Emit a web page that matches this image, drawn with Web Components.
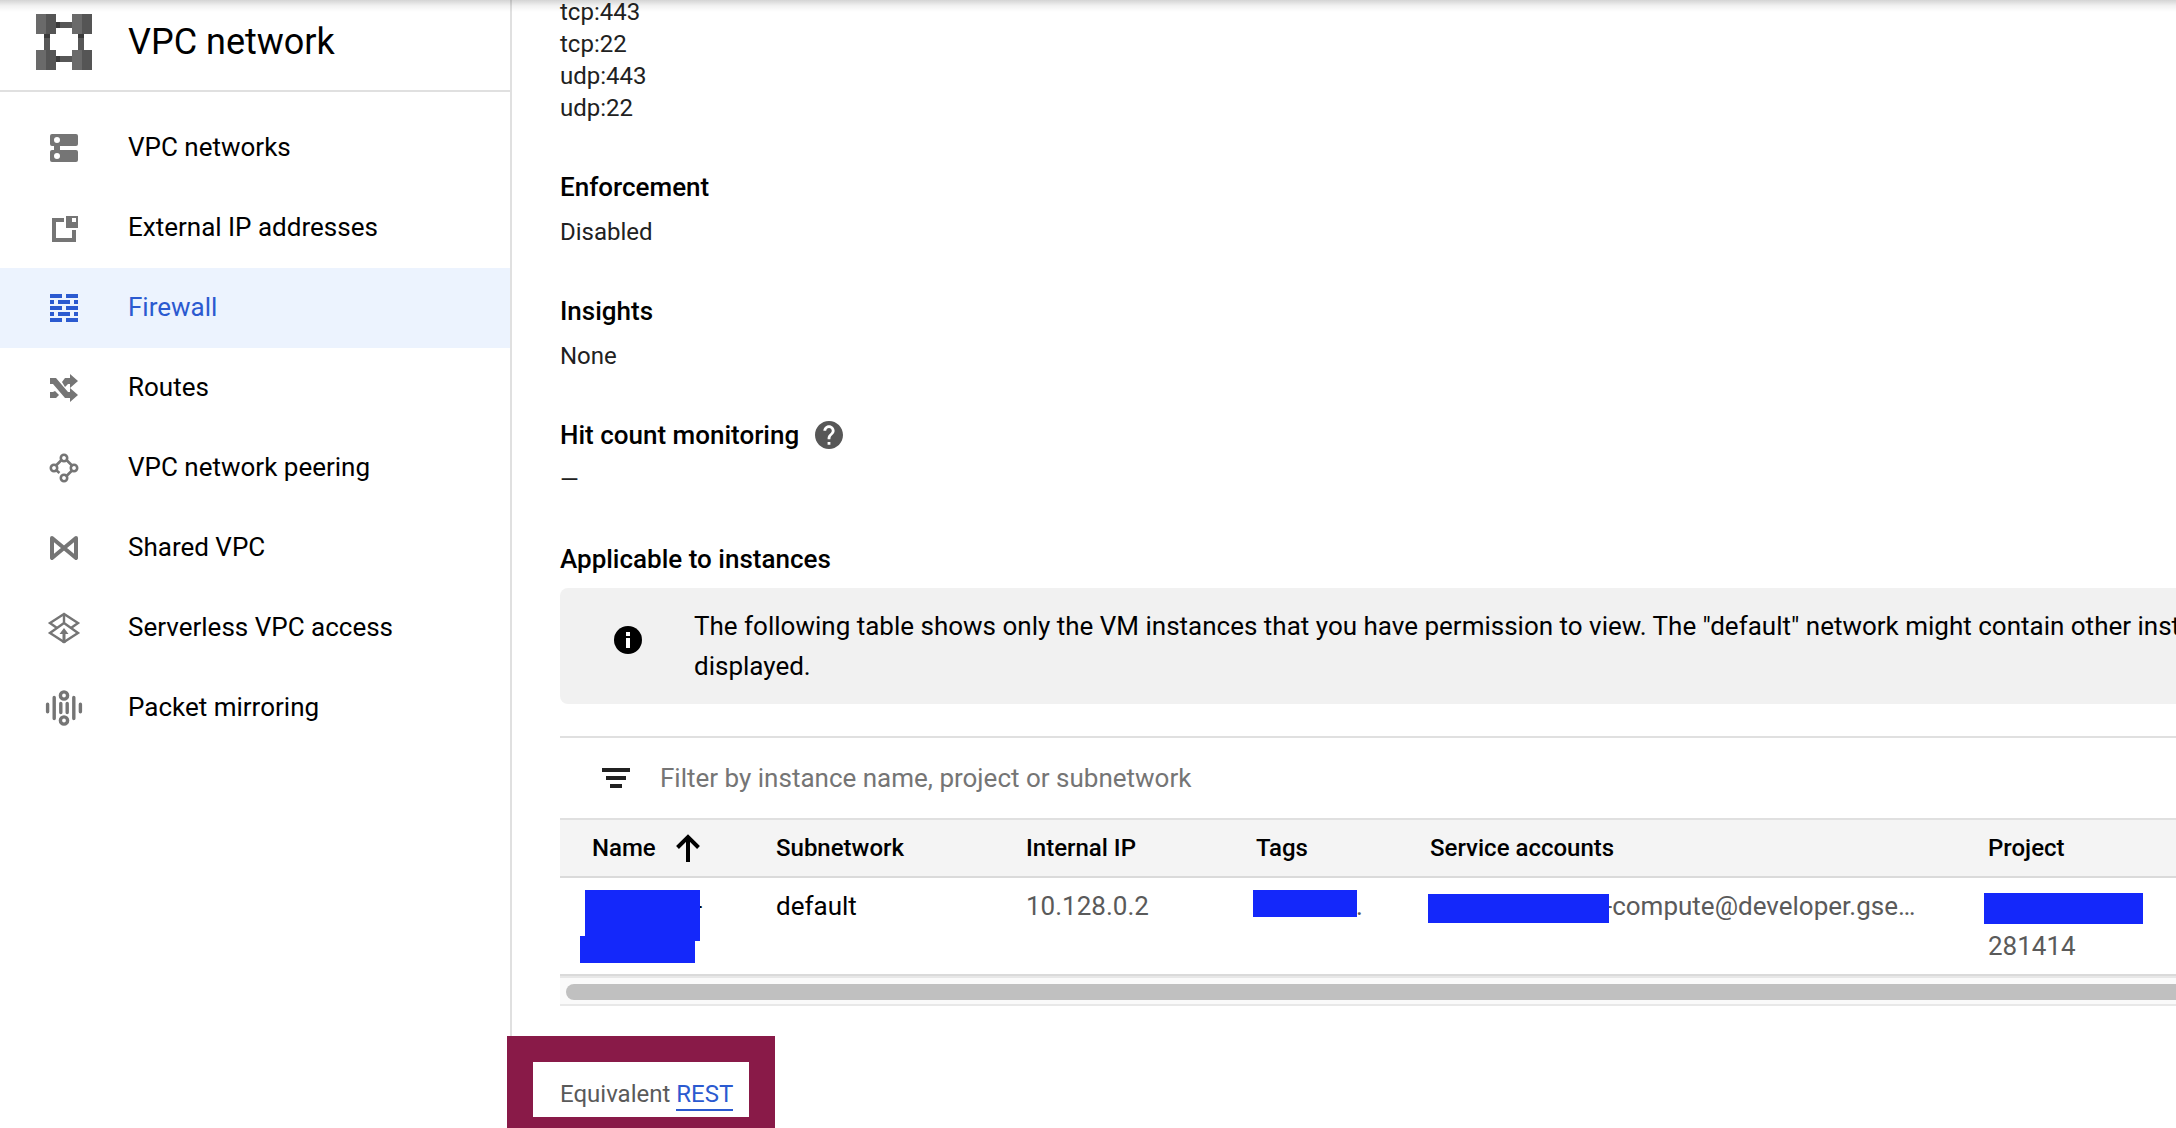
<!DOCTYPE html>
<html lang="en">
<head>
<meta charset="utf-8">
<title>VPC network – Firewall rule</title>
<style>
  html, body { margin: 0; height: 100%; }
  body { background: #fff; color: #000; font-family: Roboto, "Liberation Sans", sans-serif; font-size: 26px; overflow: hidden; }
</style>
</head>
<body>
<console-page>
  <side-nav slot="nav" heading="VPC network">
    <nav-item icon="networks">VPC networks</nav-item>
    <nav-item icon="external">External IP addresses</nav-item>
    <nav-item icon="firewall" active>Firewall</nav-item>
    <nav-item icon="routes">Routes</nav-item>
    <nav-item icon="peering">VPC network peering</nav-item>
    <nav-item icon="shared">Shared VPC</nav-item>
    <nav-item icon="serverless">Serverless VPC access</nav-item>
    <nav-item icon="mirroring">Packet mirroring</nav-item>
  </side-nav>
  <detail-field>tcp:443<br>tcp:22<br>udp:443<br>udp:22</detail-field>
  <detail-field label="Enforcement">Disabled</detail-field>
  <detail-field label="Insights">None</detail-field>
  <detail-field label="Hit count monitoring" help>—</detail-field>
  <detail-section label="Applicable to instances">
    <info-callout>The following table shows only the VM instances that you have permission to view. The "default" network might contain other instances that are not<br>displayed.</info-callout>
    <instance-table></instance-table>
  </detail-section>
  <rest-link>Equivalent</rest-link>
</console-page>

<script>
const ICONS = {
  networks: '<path fill-rule="evenodd" d="M-12-14H12a2 2 0 0 1 2 2v8a2 2 0 0 1-2 2H-4V2H12a2 2 0 0 1 2 2v8a2 2 0 0 1-2 2H-12a2 2 0 0 1-2-2V4a2 2 0 0 1 2-2h2V-2h-2a2 2 0 0 1-2-2v-8a2 2 0 0 1 2-2zM-7-11a3 3 0 1 0 0 6a3 3 0 1 0 0-6zM-7 5a3 3 0 1 0 0 6a3 3 0 1 0 0-6z"/>',
  external: '<path fill-rule="evenodd" d="M-12-10H0v4H-8V10H8V2h4V14H-12zM2-12H14V0H2zM8-10v4h4v-4z"/>',
  firewall: '<path d="M-14-14h12v4h-12zM2-14h12v4H2zM-14-8h4v4h-4zM-6-8H6v4H-6zM10-8h4v4h-4zM-14-2h12v4h-12zM2-2h12v4H2zM-14 4h4v4h-4zM-6 4H6v4H-6zM10 4h4v4h-4zM-14 10h12v4h-12zM2 10h12v4H2z"/>',
  routes: '<path d="M-14-10h6L4 4h2V0l8 7-8 7v-4H1L-11-4h-3zM6-14l8 7-8 7v-4H4L1-1-2-6l3-4h5zM-14 4h3l2-1 4 4-3 3h-6z"/>',
  peering: '<g fill="none" stroke="currentColor" stroke-width="2.6"><circle cy="-10" r="3.200"/><circle cx="-10" r="3.200"/><circle cx="10" r="3.200"/><circle cy="10" r="3.200"/><path d="M-2.500-8-8-2.500M2.500-8 8-2.500M8 2.500 2.500 8M-8 2-4.500 5"/></g>',
  shared: '<path fill="none" stroke="currentColor" stroke-width="4" stroke-linejoin="round" d="M-12-10 12 10V-10L-12 10z"/>',
  serverless: '<path fill="none" stroke="currentColor" stroke-width="2.400" d="M0-14-14-5-7 0-14 5 0 14 14 5 7 0 14-5zM-7 0 0-5 7 0M0-14v9"/><path d="M0 0 4.500 6H1.500v9h-3V6h-3z"/>',
  mirroring: '<g fill="none" stroke="currentColor" stroke-width="3.400" stroke-linecap="round"><circle cy="-12.500" r="3.600"/><circle cy="12.500" r="3.600"/><path d="M-16.400-3.800v7.600M-9.800-10.500v21M-3.200-4.500v9M3.200-4.500v9M9.800-10.500v21M16.400-3.800v7.600"/></g>'
};

function define(name, render) {
  customElements.define(name, class extends HTMLElement {
    constructor() { super(); this.attachShadow({ mode: 'open' }); }
    connectedCallback() { this.shadowRoot.innerHTML = render(this); }
  });
}

define('console-page', () => `
  <style>
    :host { display: grid; grid-template-columns: 512px minmax(0, 1fr); height: 100vh; position: relative; overflow: hidden; }
    main { padding-left: 48px; margin-top: -4px; display: flex; flex-direction: column; gap: 44px; }
    .bar-shadow { position: absolute; inset: 0 0 auto 0; height: 12px; background: linear-gradient(rgba(0,0,0,.17), rgba(0,0,0,.05) 50%, rgba(0,0,0,0)); }
  </style>
  <slot name="nav"></slot>
  <main><slot></slot></main>
  <div class="bar-shadow"></div>`);

define('side-nav', el => `
  <style>
    :host { display: block; border-right: 2px solid #e0e0e0; }
    header { display: flex; align-items: center; gap: 36px; height: 90px; padding-left: 36px; border-bottom: 2px solid #e0e0e0; }
    header svg { width: 56px; height: 56px; margin-bottom: 6px; }
    h1 { margin: 0 0 6px; font-size: 36px; line-height: 48px; font-weight: 400; }
    nav { padding-top: 16px; }
  </style>
  <header>
    <svg viewBox="0 0 56 56" shape-rendering="crispEdges" aria-hidden="true">
      <path fill="#575757" d="M20 8h16v6H20zM20 42h16v6H20zM8 20h6v16H8zM42 20h6v16h-6z"/>
      <path fill="#3a3a3a" d="M20 8h4v6h-4zM20 42h4v6h-4zM8 20h6v4H8zM42 20h6v4h-6z"/>
      <path fill="#6a6a6a" d="M0 0h10v20H0zM36 0h10v20H36zM0 36h10v20H0zM36 36h10v20H36z"/>
      <path fill="#555" d="M10 0h10v20H10zM46 0h10v20H46zM10 36h10v20H10zM46 36h10v20H46z"/>
    </svg>
    <h1>${el.getAttribute('heading')}</h1>
  </header>
  <nav><slot></slot></nav>`);

define('nav-item', el => `
  <style>
    :host { display: block; }
    a { display: flex; align-items: center; gap: 44px; height: 80px; padding-left: 44px; color: #000; text-decoration: none; }
    svg { width: 40px; height: 40px; color: #757575; fill: currentColor; }
    span { line-height: 36px; padding-bottom: 2px; }
    :host([active]) a { background: #ecf3fe; color: #2b5ad0; }
    :host([active]) svg { color: #2b5ad0; }
  </style>
  <a href="#" ${el.hasAttribute('active') ? 'aria-current="page"' : ''}>
    <svg viewBox="-20 -20 40 40" aria-hidden="true">${ICONS[el.getAttribute('icon')]}</svg>
    <span><slot></slot></span>
  </a>`);

const HEADING = `h2 { margin: 0; font-size: 26px; line-height: 38px; font-weight: 500; }`;

define('detail-field', el => `
  <style>
    :host { display: flex; flex-direction: column; gap: 10px; }
    header { display: flex; align-items: center; gap: 16px; height: 38px; }
    ${HEADING}
    button { display: flex; padding: 0; border: 0; background: none; }
    div { font-size: 24px; line-height: 32px; color: #212121; }
  </style>
  ${el.hasAttribute('label') ? `<header><h2>${el.getAttribute('label')}</h2>${el.hasAttribute('help') ? `
    <button aria-label="Help"><svg width="28" height="28" viewBox="2 2 20 20" fill="#575757"><path d="M12 2C6.480 2 2 6.480 2 12s4.480 10 10 10 10-4.480 10-10S17.520 2 12 2zm1 17h-2v-2h2v2zm2.070-7.750-.9.920C13.450 12.900 13 13.500 13 15h-2v-.5c0-1.100.45-2.100 1.170-2.830l1.240-1.260c.37-.36.590-.86.590-1.410 0-1.100-.9-2-2-2s-2 .9-2 2H8c0-2.210 1.790-4 4-4s4 1.790 4 4c0 .88-.36 1.680-.93 2.250z"/></svg></button>` : ''}</header>` : ''}
  <div><slot></slot></div>`);

define('detail-section', el => `
  <style>
    :host { display: flex; flex-direction: column; gap: 10px; }
    ${HEADING}
  </style>
  <h2>${el.getAttribute('label')}</h2>
  <slot></slot>`);

define('info-callout', () => `
  <style>
    :host { display: flex; align-items: flex-start; gap: 52px; padding: 18px 0 18px 54px; border-radius: 8px 0 0 8px; background: #f1f1f1; overflow: hidden; }
    svg { flex: none; margin-top: 20px; }
    p { margin: 0; line-height: 40px; white-space: nowrap; }
  </style>
  <svg width="28" height="28" viewBox="0 0 28 28" aria-hidden="true"><circle cx="14" cy="14" r="14"/><path fill="#fff" d="M12 6h4v4h-4zM12 12h4v10h-4z"/></svg>
  <p><slot></slot></p>`);

define('redaction-bar', () => `
  <style>
    :host { display: block; position: absolute; background: #1428fa; }
  </style>`);

define('instance-table', () => `
  <style>
    :host { display: block; margin-top: 22px; border-top: 2px solid #e0e0e0; }
    label { display: flex; align-items: center; gap: 30px; height: 80px; padding-left: 42px; }
    input { flex: 1; min-width: 0; height: 40px; padding: 0; border: 0; outline: 0; background: none; font: inherit; color: #000; }
    input::placeholder { color: #757575; opacity: 1; }
    table { width: 100%; table-layout: fixed; border-collapse: separate; border-spacing: 0; }
    th, td { padding: 0; text-align: left; vertical-align: top; white-space: nowrap; }
    th { height: 56px; border-top: 2px solid #e0e0e0; border-bottom: 2px solid #dadada; background: #f4f4f4; font-size: 24px; line-height: 32px; font-weight: 500; vertical-align: middle; }
    td { position: relative; height: 80px; padding: 8px 0; line-height: 40px; color: #5a5a5a; }
    th:first-child, td:first-child { padding-left: 32px; }
    td.strong { color: #000; }
    button { display: flex; align-items: center; gap: 20px; padding: 0; border: 0; background: none; font: inherit; color: inherit; }
    .account { padding-left: 175px; }
    .tag { padding-left: 100px; }
    .name { padding-left: 103px; }
    .name-a { left: 25px; top: 12px; width: 115px; height: 51px; }
    .name-b { left: 20px; top: 58px; width: 115px; height: 27px; }
    .tag-a { left: -3px; top: 12px; width: 104px; height: 27px; }
    .account-a { left: -2px; top: 16px; width: 181px; height: 29px; }
    .project-a { left: -4px; top: 15px; width: 159px; height: 31px; }
    .track { height: 16px; padding: 8px 0 4px 6px; background: #fafafa; border: solid #dadada; border-width: 2px 0; border-bottom-color: #e8e8e8; box-shadow: inset 0 2px #e7e7e7; }
    .thumb { height: 16px; border-radius: 8px 0 0 8px; background: #c0c0c0; }
  </style>
  <label>
    <svg width="28" height="20" viewBox="0 0 28 20" fill="#212121" aria-hidden="true"><path d="M0 0h28v4H0zM4 8h20v4H4zM8 16h12v4H8z"/></svg>
    <input type="text" aria-label="Filter instances" placeholder="Filter by instance name, project or subnetwork">
  </label>
  <table>
    <colgroup><col style="width:216px"><col style="width:250px"><col style="width:230px"><col style="width:174px"><col style="width:558px"><col></colgroup>
    <thead><tr>
      <th><button>Name <svg width="24" height="28" viewBox="0 0 24 28" fill="none" stroke="#000" stroke-width="4" aria-hidden="true"><path d="M12 28V3M1.500 13.500 12 3l10.500 10.500"/></svg></button></th>
      <th>Subnetwork</th><th>Internal IP</th><th>Tags</th><th>Service accounts</th><th>Project</th>
    </tr></thead>
    <tbody><tr>
      <td class="strong"><span class="name">-</span><redaction-bar class="name-a"></redaction-bar><redaction-bar class="name-b"></redaction-bar></td>
      <td class="strong">default</td>
      <td>10.128.0.2</td>
      <td><span class="tag">.</span><redaction-bar class="tag-a"></redaction-bar></td>
      <td><span class="account">-compute@developer.gse…</span><redaction-bar class="account-a"></redaction-bar></td>
      <td><br>281414<redaction-bar class="project-a"></redaction-bar></td>
    </tr></tbody>
  </table>
  <div class="track"><div class="thumb"></div></div>`);

define('rest-link', () => `
  <style>
    :host { display: block; margin-top: 28px; font-size: 24px; line-height: 32px; color: #5a5a5a; }
    p { position: relative; display: inline-block; margin: 0; }
    a { color: #2b5ad0; text-decoration: none; display: inline-block; border-bottom: 2px solid; line-height: 30px; }
    .highlight { position: absolute; inset: -42px -42px -32px -53px; border: 26px solid #891a48; pointer-events: none; }
  </style>
  <p><slot></slot> <a href="#">REST</a><span class="highlight"></span></p>`);
</script>
</body>
</html>
